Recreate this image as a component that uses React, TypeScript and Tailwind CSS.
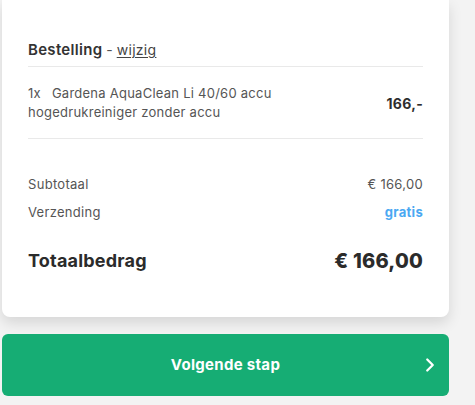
import { ChevronRight } from "lucide-react"

export default function App() {
  return (
    <div
      className="min-h-[405px] w-[475px] bg-[#f3f3f3] pl-[2px]"
      style={{ fontFamily: "Inter, 'Noto Sans', sans-serif" }}
    >
      <div className="w-[447px] rounded-b-[8px] bg-white px-[26px] pb-[42px] shadow-[0_6px_14px_rgba(0,0,0,0.12)]">
        <div className="border-b border-[#e9e9e9] pt-[40px] pb-[6px] text-[14px] leading-[20px] text-[#333]">
          <span className="text-[15px] font-semibold tracking-[0.3px]">Bestelling</span>
          <span className="text-[#555]"> - </span>
          <span className="text-[#444] underline underline-offset-2 tracking-[0.3px]">wijzig</span>
        </div>

        <div className="flex items-center justify-between border-b border-[#e9e9e9] pt-[17px] pb-[16px]">
          <div className="text-[13px] leading-[19px] tracking-[0.25px] text-[#555]">
            <div>
              1x<span className="ml-[11px]">Gardena AquaClean Li 40/60 accu</span>
            </div>
            <div>hogedrukreiniger zonder accu</div>
          </div>
          <div className="text-[14px] font-bold tracking-[0.3px] text-[#2d2d2d]">166,-</div>
        </div>

        <div className="pt-[31px] text-[13px] leading-[28px] tracking-[0.3px] text-[#555]">
          <div className="flex justify-between">
            <span>Subtotaal</span>
            <span>€ 166,00</span>
          </div>
          <div className="flex justify-between">
            <span>Verzending</span>
            <span className="font-bold text-[#4aa8f2]">gratis</span>
          </div>
        </div>

        <div className="mt-[21px] flex items-center justify-between leading-[28px] tracking-[0.2px] text-[#2b2b2b]">
          <span className="text-[18px] font-bold">Totaalbedrag</span>
          <span className="text-[20px] font-extrabold">€ 166,00</span>
        </div>
      </div>

      <button className="relative mt-[17px] flex h-[62px] w-[447px] items-center justify-center rounded-[6px] bg-[#16ad74] text-[15px] font-bold tracking-[0.3px] text-white">
        Volgende stap
        <ChevronRight
          className="absolute right-[8px] top-1/2 -translate-y-1/2"
          size={22}
          strokeWidth={2.5}
        />
      </button>
    </div>
  )
}
